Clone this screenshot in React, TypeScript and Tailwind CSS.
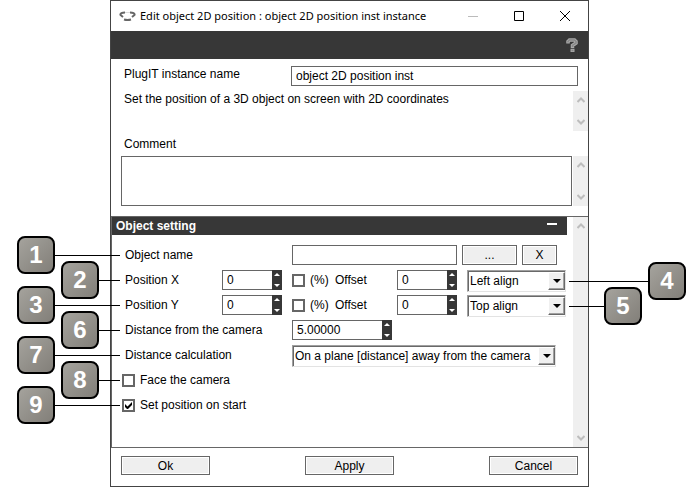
import { useState } from 'react';
import type { ReactNode } from 'react';

const ALIGN_X = ['Left align', 'Center align', 'Right align'];
const ALIGN_Y = ['Top align', 'Middle align', 'Bottom align'];
const CALCULATIONS = ['On a plane [distance] away from the camera', 'Distance to the camera'];

const FIELD = 'h-5 min-w-0 border border-[#666] bg-white px-1 outline-none';
const BUTTON = 'border border-[#666] bg-[#efefef] text-center shadow-[inset_0_0_0_1px_#fff]';

function Badge({ n }: { n: number }) {
  return (
    <span className="flex size-[38px] shrink-0 items-center justify-center rounded-lg border-2 border-black bg-linear-to-br from-[#a5a39d] to-[#827f79] text-2xl font-bold text-white">
      {n}
    </span>
  );
}

function LeftCallout({ n, near }: { n: number; near?: boolean }) {
  return (
    <div className={`absolute right-full top-1/2 flex -translate-y-1/2 items-center ${near ? 'w-[59px]' : 'w-[103px]'}`}>
      <Badge n={n} />
      <span className="h-px flex-1 bg-black" />
    </div>
  );
}

function RightCallout({ n, near }: { n: number; near?: boolean }) {
  return (
    <div className={`absolute left-full top-1/2 ml-[3px] flex -translate-y-1/2 items-center ${near ? 'w-[73px]' : 'w-[117px]'}`}>
      <span className="h-px flex-1 bg-black" />
      <Badge n={n} />
    </div>
  );
}

function Scrollbar() {
  return (
    <div className="flex w-[15px] shrink-0 flex-col items-center justify-between bg-[#efefef] py-1.5 text-[#bdbdbd]">
      <svg width="8" height="6" viewBox="0 0 8 6" fill="none" stroke="currentColor" strokeWidth="2">
        <path d="M.5 5 4 1.5 7.5 5" />
      </svg>
      <svg width="8" height="6" viewBox="0 0 8 6" fill="none" stroke="currentColor" strokeWidth="2">
        <path d="M.5 1 4 4.5 7.5 1" />
      </svg>
    </div>
  );
}

function Spinner({ label, initial, step = 1, digits = 0, className }: {
  label: string;
  initial: string;
  step?: number;
  digits?: number;
  className: string;
}) {
  const [value, setValue] = useState(initial);

  function bump(delta: number) {
    setValue(prev => ((parseFloat(prev) || 0) + delta).toFixed(digits));
  }

  return (
    <div className={`flex h-5 ${className}`}>
      <input
        type="text"
        aria-label={label}
        value={value}
        onChange={e => setValue(e.target.value)}
        className={`${FIELD} flex-1 border-r-0`}
      />
      <div className="flex w-2.5 flex-col justify-between bg-[#373737] py-[3px]">
        <button type="button" aria-label={`Increase ${label}`} onClick={() => bump(step)} className="flex justify-center">
          <svg width="6" height="3" viewBox="0 0 6 3" fill="#fff"><path d="M0 3 3 0l3 3z" /></svg>
        </button>
        <button type="button" aria-label={`Decrease ${label}`} onClick={() => bump(-step)} className="flex justify-center">
          <svg width="6" height="3" viewBox="0 0 6 3" fill="#fff"><path d="M0 0h6L3 3z" /></svg>
        </button>
      </div>
    </div>
  );
}

function Checkbox({ children, defaultChecked, className }: { children: ReactNode; defaultChecked?: boolean; className?: string }) {
  return (
    <label className={`flex items-center gap-[5px] ${className ?? ''}`}>
      <span className="grid">
        <input
          type="checkbox"
          defaultChecked={defaultChecked}
          className="peer col-start-1 row-start-1 size-[13px] appearance-none border-2 border-[#666] bg-white"
        />
        <svg className="pointer-events-none invisible col-start-1 row-start-1 peer-checked:visible" width="13" height="13" viewBox="0 0 13 13" fill="#000">
          <path d="M3 5v3l2 2h1l4-4V3L5.500 7.500z" />
        </svg>
      </span>
      {children}
    </label>
  );
}

function Select({ label, options, className, children }: { label: string; options: string[]; className: string; children?: ReactNode }) {
  return (
    <div className={`relative h-[22px] ${className}`}>
      <select
        aria-label={label}
        className="h-full w-full appearance-none border border-[#a0a0a0] border-r-[#e3e3e3] border-b-[#e3e3e3] bg-white pr-4 pl-0.5 shadow-[inset_1px_1px_0_#696969] outline-none"
      >
        {options.map(opt => <option key={opt}>{opt}</option>)}
      </select>
      <span className="pointer-events-none absolute inset-y-0.5 right-px flex w-[17px] items-center justify-center border border-[#fff] border-r-[#696969] border-b-[#696969] bg-[#f0f0f0] shadow-[inset_-1px_-1px_0_#a0a0a0]">
        <svg width="8" height="4" viewBox="0 0 8 4"><path d="M0 0h8L4 4z" /></svg>
      </span>
      {children}
    </div>
  );
}

function Row({ n, near, children }: { n: number; near?: boolean; children: ReactNode }) {
  return (
    <div className="relative flex h-5 items-center">
      <LeftCallout n={n} near={near} />
      {children}
    </div>
  );
}

function PositionRow({ n, near, axis, options, children }: {
  n: number;
  near?: boolean;
  axis: string;
  options: string[];
  children: ReactNode;
}) {
  return (
    <Row n={n} near={near}>
      <span className="w-[102px] shrink-0 pl-[5px]">Position {axis}</span>
      <Spinner label={`Position ${axis}`} initial="0" className="w-[60px] shrink-0" />
      <Checkbox className="ml-2.5 w-[43px] shrink-0">(%)</Checkbox>
      <span className="w-[62px] shrink-0">Offset</span>
      <Spinner label={`Offset ${axis}`} initial="0" className="w-[60px] shrink-0" />
      <Select label={`Align ${axis}`} options={options} className="ml-2.5 w-[99px] shrink-0 self-start">
        {children}
      </Select>
    </Row>
  );
}

export default function App() {
  const [name, setName] = useState('object 2D position inst');
  const [open, setOpen] = useState(true);

  return (
    <div className="min-h-screen bg-white pr-[111px] pl-[110px] font-['Liberation_Sans',Arial,sans-serif] text-xs leading-4 text-black">
      <div className="border border-[#444]">
        <header className="flex h-[30px] items-center pl-2 font-['Noto_Sans','Segoe_UI',sans-serif] text-[11px]">
          <svg width="17" height="10" viewBox="0 0 17 10" fill="none" stroke="#666" strokeWidth="2">
            <path d="M6 1.500C3 1.500 1 2.500 1.500 4L4 6M11 1.500c3 0 5 1 4.500 2.500L13 6" />
            <path d="M5 8.500q3.500 1 7 0" />
            <path d="M6 1.500h5" stroke="#ddd" strokeWidth="1" />
          </svg>
          <h1 className="ml-1 min-w-0 flex-1 truncate">Edit object 2D position : object 2D position inst instance</h1>
          <button type="button" aria-label="Minimize" className="flex w-[46px] justify-center">
            <svg width="10" height="10" viewBox="0 0 10 10" stroke="#bbb"><path d="M0 5.500h10" /></svg>
          </button>
          <button type="button" aria-label="Maximize" className="flex w-[46px] justify-center">
            <svg width="10" height="10" viewBox="0 0 10 10" fill="none" stroke="#000"><path d="M.5.5h9v9h-9z" /></svg>
          </button>
          <button type="button" aria-label="Close" className="flex w-[46px] justify-center">
            <svg width="10" height="10" viewBox="0 0 10 10" stroke="#000"><path d="m0 0 10 10M10 0 0 10" /></svg>
          </button>
        </header>

        <div className="flex h-7 items-center justify-end bg-[#373737] pr-2.5">
          <button type="button" aria-label="Help">
            <svg width="12" height="14" viewBox="0 0 12 14" fill="none">
              <path d="M2 5.500V3.500L3.500 2h5L10 3.500v1.500L6.500 7.500V10M4.500 12.500h4" stroke="#aaa" strokeWidth="3.500" />
              <path d="M2 4.500v-1L3.500 2h5L10 3.500v1.500L6.500 7.500v1.500M5.500 12.500h2" stroke="#888" strokeWidth="1.500" />
            </svg>
          </button>
        </div>

        <div className="flex pt-[7px] pr-2.5 pl-[13px]">
          <label htmlFor="instance-name" className="w-[167px] shrink-0">PlugIT instance name</label>
          <input
            id="instance-name"
            type="text"
            value={name}
            onChange={e => setName(e.target.value)}
            className={`${FIELD} flex-1`}
          />
        </div>

        <div className="mt-[5px] flex h-10">
          <p className="flex-1 pl-[13px]">Set the position of a 3D object on screen with 2D coordinates</p>
          <Scrollbar />
        </div>

        <label htmlFor="comment" className="mt-[5px] block pl-[13px]">Comment</label>
        <div className="mt-1 flex h-[50px] pl-2.5">
          <textarea id="comment" className="mr-px min-w-0 flex-1 resize-none border border-[#666] p-1 outline-none" />
          <Scrollbar />
        </div>

        <section className="mt-2.5 flex h-[232px] border-y border-l border-[#666]">
          <div className="mr-[6px] min-w-0 flex-1">
            <div className="flex h-[18px] items-center bg-[#373737] pr-2.5 pl-1 font-bold text-white">
              <h2 className="flex-1">Object setting</h2>
              <button type="button" aria-label="Collapse" onClick={() => setOpen(prev => !prev)}>
                <svg width="10" height="6" viewBox="0 0 10 6" fill="#fff"><path d="M0 0h10v2H0z" /></svg>
              </button>
            </div>
            {open && (
              <div className="ml-2 flex flex-col gap-[5px] pt-2.5">
                <Row n={1}>
                  <label htmlFor="object-name" className="w-[172px] shrink-0 pl-[5px]">Object name</label>
                  <input id="object-name" type="text" className={`${FIELD} flex-1`} />
                  <button type="button" className={`${BUTTON} mx-[5px] h-5 w-[55px]`}>...</button>
                  <button type="button" className={`${BUTTON} mr-2.5 h-5 w-[35px]`}>X</button>
                </Row>
                <PositionRow n={2} near axis="X" options={ALIGN_X}>
                  <RightCallout n={4} />
                </PositionRow>
                <PositionRow n={3} axis="Y" options={ALIGN_Y}>
                  <RightCallout n={5} near />
                </PositionRow>
                <Row n={6} near>
                  <span className="w-[172px] shrink-0 pl-[5px]">Distance from the camera</span>
                  <Spinner label="Distance from the camera" initial="5.00000" step={0.1} digits={5} className="w-[100px]" />
                </Row>
                <Row n={7}>
                  <span className="w-[172px] shrink-0 pl-[5px]">Distance calculation</span>
                  <Select label="Distance calculation" options={CALCULATIONS} className="w-[264px] shrink-0 self-start" />
                </Row>
                <Row n={8} near>
                  <Checkbox className="pl-0.5">Face the camera</Checkbox>
                </Row>
                <Row n={9}>
                  <Checkbox className="pl-0.5" defaultChecked>Set position on start</Checkbox>
                </Row>
              </div>
            )}
          </div>
          <Scrollbar />
        </section>

        <footer className="flex justify-between px-2.5 pt-2 pb-[11px]">
          <button type="button" className={`${BUTTON} h-[19px] w-[89px]`}>Ok</button>
          <button type="button" className={`${BUTTON} h-[19px] w-[89px]`}>Apply</button>
          <button type="button" className={`${BUTTON} h-[19px] w-[89px]`}>Cancel</button>
        </footer>
      </div>
    </div>
  );
}
